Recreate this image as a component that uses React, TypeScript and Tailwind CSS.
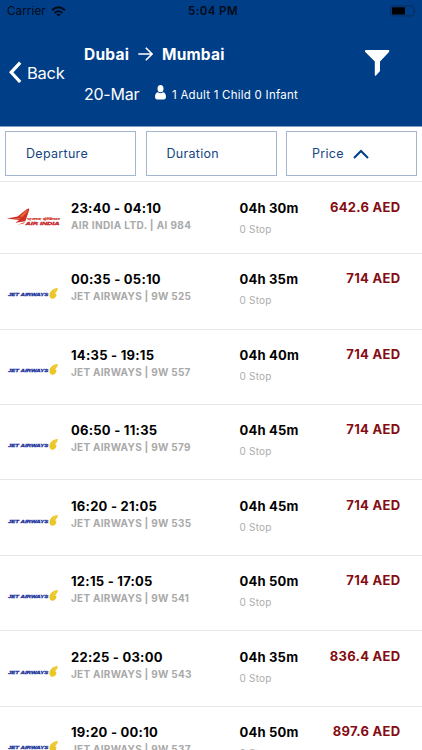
interface Flight {
  id: string
  airline: 'air-india' | 'jet'
  times: string
  label: string
  duration: string
  stops: number
  price: string
  spacing: string
}

const FLIGHTS: Flight[] = [
  { id: 'AI984', airline: 'air-india', times: '23:40 - 04:10', label: 'AIR INDIA LTD. | AI 984', duration: '04h 30m', stops: 0, price: '642.6 AED', spacing: 'h-[72px] pt-px' },
  { id: '9W525', airline: 'jet', times: '00:35 - 05:10', label: 'JET AIRWAYS | 9W 525', duration: '04h 35m', stops: 0, price: '714 AED', spacing: 'h-[76px]' },
  { id: '9W557', airline: 'jet', times: '14:35 - 19:15', label: 'JET AIRWAYS | 9W 557', duration: '04h 40m', stops: 0, price: '714 AED', spacing: 'h-[75px]' },
  { id: '9W579', airline: 'jet', times: '06:50 - 11:35', label: 'JET AIRWAYS | 9W 579', duration: '04h 45m', stops: 0, price: '714 AED', spacing: 'h-[75px]' },
  { id: '9W535', airline: 'jet', times: '16:20 - 21:05', label: 'JET AIRWAYS | 9W 535', duration: '04h 45m', stops: 0, price: '714 AED', spacing: 'h-[76px] pt-px' },
  { id: '9W541', airline: 'jet', times: '12:15 - 17:05', label: 'JET AIRWAYS | 9W 541', duration: '04h 50m', stops: 0, price: '714 AED', spacing: 'h-[75px]' },
  { id: '9W543', airline: 'jet', times: '22:25 - 03:00', label: 'JET AIRWAYS | 9W 543', duration: '04h 35m', stops: 0, price: '836.4 AED', spacing: 'h-[76px] pt-px' },
  { id: '9W537', airline: 'jet', times: '19:20 - 00:10', label: 'JET AIRWAYS | 9W 537', duration: '04h 50m', stops: 0, price: '897.6 AED', spacing: 'h-[76px]' },
]

function AirIndiaLogo() {
  return (
    <svg className="block w-[56px] h-[20px]" viewBox="0 0 56 20">
      <path d="M0.8 11.6 L11.5 9.6 L21 2 Q23.6 0.4 23.2 3 L19.4 14.2 L9.5 15.8 L13 13 Z" fill="#cf3129" />
      <path d="M13.5 9.2 L21.2 3 Q22.6 2.4 21.4 4.6 L16.5 10 Z M7 11.8 L15 10.8 L13.5 12.2 Z" fill="#e8692f" />
      <path d="M11.5 17.8 L19 15 L17.6 16.6 Z" fill="#d8382c" />
      <text x="21" y="13.2" textLength="33" lengthAdjust="spacingAndGlyphs" className="font-['Noto_Sans',sans-serif] text-[3.6px] font-bold italic" fill="#d24a40" stroke="#d24a40" strokeWidth="0.2">एअर इंडिया</text>
      <text x="19.5" y="17.6" textLength="34" lengthAdjust="spacingAndGlyphs" className="font-['Liberation_Sans',sans-serif] text-[4.3px] font-bold italic" fill="#c8232a" stroke="#c8232a" strokeWidth="0.3">AIR INDIA</text>
    </svg>
  )
}

function JetAirwaysLogo() {
  return (
    <svg className="block w-[52px] h-[14px]" viewBox="0 0 52 14">
      <text x="0.9" y="9.4" textLength="40.5" lengthAdjust="spacingAndGlyphs" className="font-['Liberation_Sans',sans-serif] text-[4.2px] font-bold italic" fill="#20349c" stroke="#20349c" strokeWidth="0.3">JET AIRWAYS</text>
      <path d="M50.8 1.1 C45.6 1.4 42.4 4.8 42.5 8.6 C42.6 10.8 43.8 11.9 45.6 11.7 C48.4 11.4 49.8 9.2 49.3 6.4 L47.6 6.5 C49.6 5.2 50.8 3.2 50.8 1.1 Z" fill="#ecc526" />
      <path d="M49.2 2.2 L45.8 5.6" stroke="#f8e48c" strokeWidth="0.5" />
    </svg>
  )
}

function StatusBar() {
  return (
    <div className="flex items-center h-[22px] text-[#020a18]">
      <div className="flex flex-1 items-center pl-[7px]">
        <span className="w-[39px] pt-[2px] text-[11.5px] tracking-[0.15px]">Carrier</span>
        <svg className="ml-[5px] w-[15px] h-[11px]" viewBox="0 0 15 11" fill="none" stroke="currentColor" strokeWidth="1.9">
          <path d="M1 4.1 Q7.5 -1.6 14 4.1" />
          <path d="M3.6 6.9 Q7.5 3.6 11.4 6.9" />
          <path d="M7.5 10.6 L5.3 8.4 Q7.5 6.9 9.7 8.4 Z" fill="currentColor" stroke="none" />
        </svg>
      </div>
      <span className="pl-[2px] pt-px text-[11.5px] font-semibold tracking-[0.4px]">5:04 PM</span>
      <div className="flex flex-1 justify-end pr-[5px]">
        <svg className="w-[27px] h-[12px]" viewBox="0 0 27 12">
          <rect x="0.6" y="0.9" width="23.2" height="10" rx="1.8" fill="none" stroke="#092d5f" />
          <rect x="2" y="2.3" width="13" height="7.2" rx="0.6" fill="#000" />
          <path d="M25 4 Q26.6 5.9 25 7.8 Z" fill="#092d5f" />
        </svg>
      </div>
    </div>
  )
}

function Header() {
  return (
    <header className="h-[127px] shrink-0 border-b border-[#7f9fc4] bg-[#003e87] text-white">
      <StatusBar />
      <div className="flex h-[104px]">
        <button className="flex w-[84px] items-start pl-[9px] pt-[39px]">
          <svg className="w-[13px] h-[22px]" viewBox="0 0 13 22" fill="none" stroke="currentColor" strokeWidth="3.2">
            <path d="M11.2 1.6 L2.2 11.3 L11.2 21" />
          </svg>
          <span className="ml-[5px] text-[16.5px] leading-[24px] tracking-[-0.25px]">Back</span>
        </button>
        <div className="flex-1 pt-[22px]">
          <div className="flex h-[22px] items-center text-[15.5px] font-bold">
            <span className="w-[54px] whitespace-nowrap tracking-[0.25px]">Dubai</span>
            <svg className="-mt-[2px] w-[15px] h-[14px]" viewBox="0 0 15 14" fill="none" stroke="currentColor" strokeWidth="1.6">
              <path d="M0.3 7 H14 M7.8 0.8 L14 7 L7.8 13.2" />
            </svg>
            <span className="ml-[9px] tracking-[0.2px]">Mumbai</span>
          </div>
          <div className="mt-[16px] flex h-[24px] items-center">
            <span className="w-[71px] whitespace-nowrap text-[16px] tracking-[-0.25px]">20-Mar</span>
            <svg className="-mt-[3px] w-[11px] h-[15px]" viewBox="0 0 11 15" fill="currentColor">
              <ellipse cx="5.5" cy="3.7" rx="3" ry="3.6" />
              <path d="M0 12 C0 8.7 1.5 7.5 3 7.3 Q5.5 9.2 8 7.3 C9.5 7.5 11 8.7 11 12 Q11 14.4 9 14.4 H2 Q0 14.4 0 12 Z" />
            </svg>
            <span className="ml-[6px] mt-[3px] whitespace-nowrap text-[11.5px] tracking-[0.25px]">1 Adult 1 Child 0 Infant</span>
          </div>
        </div>
        <button className="flex w-[58px] items-start pt-[27px]">
          <svg className="w-[26px] h-[28px]" viewBox="0 0 26 28" fill="currentColor">
            <path d="M1.5 1 H24.8 Q26 2 25 3 L16 12.4 V22 L12 26.5 Q10.8 27.2 10.8 25.8 V12.4 L1.3 3 Q0.3 2 1.5 1 Z" />
          </svg>
        </button>
      </div>
    </header>
  )
}

function SortBar() {
  return (
    <div className="flex h-[54px] shrink-0 justify-between px-[5px] pt-[4px] text-[12.5px] tracking-[0.3px] text-[#154583]">
      <button className="flex h-[45px] w-[131px] items-center border border-[#a3b5cf] pl-[20px] pt-[2px]">Departure</button>
      <button className="flex h-[45px] w-[131px] items-center border border-[#a3b5cf] pl-[20px] pt-[2px]">Duration</button>
      <button className="flex h-[45px] w-[131px] items-center border border-[#a3b5cf] pl-[25px] pt-[2px]">
        <span className="w-[41px] text-left">Price</span>
        <svg className="-mt-px w-[16px] h-[10px]" viewBox="0 0 16 10" fill="none" stroke="#003e87" strokeWidth="2">
          <path d="M1 9 L8 2 L15 9" />
        </svg>
      </button>
    </div>
  )
}

function FlightRow({ flight }: { flight: Flight }) {
  const isAirIndia = flight.airline === 'air-india'

  return (
    <li className={`flex shrink-0 border-t border-[#e6e6e6] ${flight.spacing}`}>
      <div className={`w-[71px] ${isAirIndia ? 'pl-[6px] pt-[24px]' : 'pl-[7px] pt-[33px]'}`}>
        {isAirIndia ? <AirIndiaLogo /> : <JetAirwaysLogo />}
      </div>
      <div className="w-[168.5px] pt-[15px]">
        <p className="text-[13px] leading-[20px] font-bold tracking-[0.25px] text-black">{flight.times}</p>
        <p className={`text-[10px] leading-[15px] font-bold text-[#a9a9a9] ${isAirIndia ? 'tracking-[0.38px]' : 'tracking-[0.27px]'}`}>
          {flight.label}
        </p>
      </div>
      <div className="w-[80px] pt-[15px]">
        <p className="text-[13px] leading-[20px] font-bold tracking-[0.2px] text-black">{flight.duration}</p>
        <p className="mt-[4px] text-[10px] leading-[15px] tracking-[0.2px] text-[#acacac]">{flight.stops} Stop</p>
      </div>
      <p className="flex-1 pr-[21.5px] pt-[14px] text-right text-[13px] leading-[20px] font-bold tracking-[0.3px] text-[#850c12]">
        {flight.price}
      </p>
    </li>
  )
}

export default function App() {
  return (
    <div className="flex h-screen w-full flex-col overflow-hidden bg-white font-['Inter','Noto_Sans',sans-serif]">
      <Header />
      <SortBar />
      <ul className="flex flex-1 flex-col overflow-hidden">
        {FLIGHTS.map((flight) => (
          <FlightRow key={flight.id} flight={flight} />
        ))}
      </ul>
    </div>
  )
}
